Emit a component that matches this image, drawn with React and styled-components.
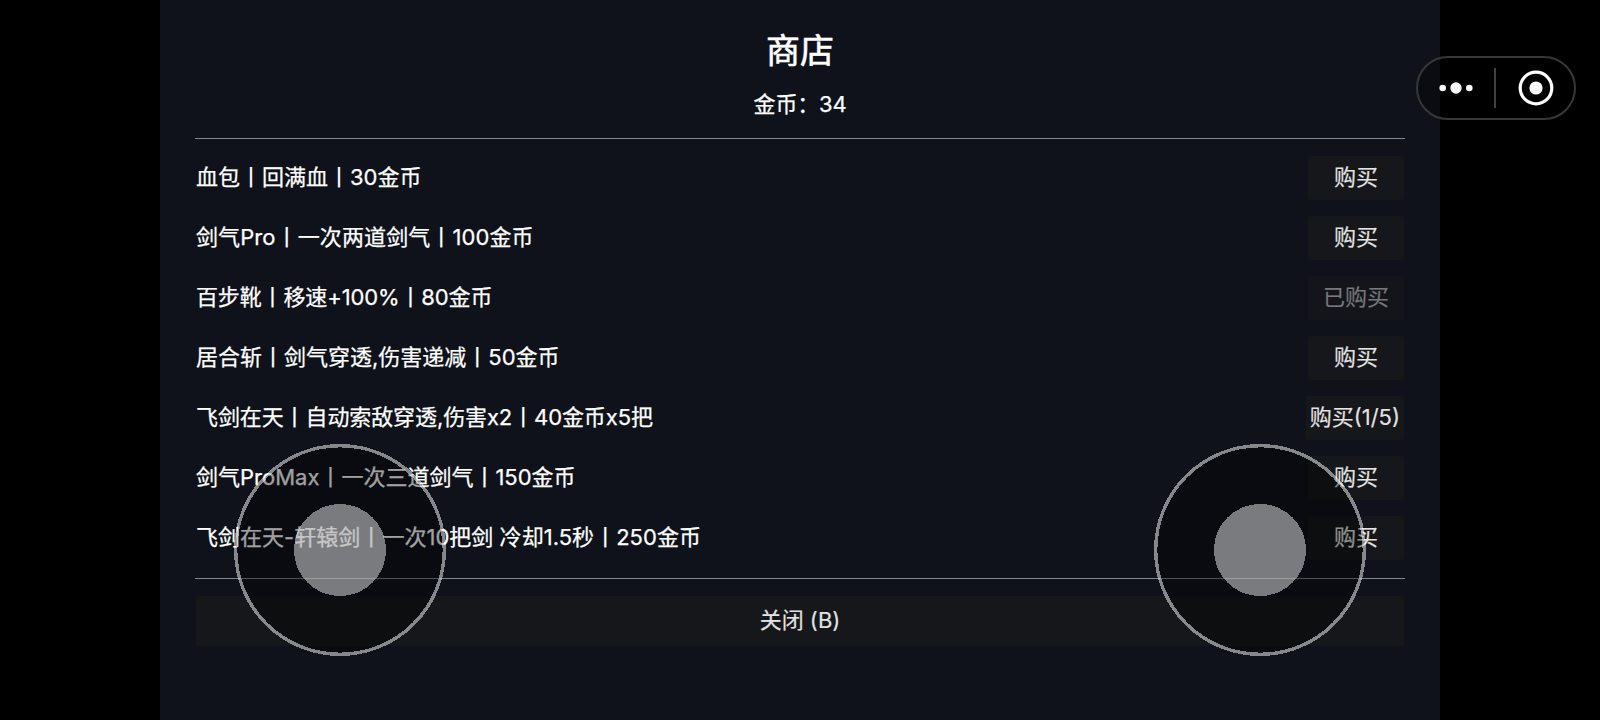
import React from "react";
import styled, { createGlobalStyle } from "styled-components";

const GlobalStyle = createGlobalStyle`
  * {
    box-sizing: border-box;
  }
  body {
    margin: 0;
    background: #000;
    overflow: hidden;
    font-family: Inter, "Noto Sans CJK SC", sans-serif;
  }
`;

const Screen = styled.div`
  position: relative;
  display: flex;
  justify-content: center;
  width: 1600px;
  height: 720px;
  background: #000;
`;

const Panel = styled.main`
  display: flex;
  flex-direction: column;
  width: 1280px;
  height: 720px;
  padding: 28px 35px 0;
  background: #0f121a;
  color: #fff;
  font-size: 22px;
  font-weight: 400;
  -webkit-text-stroke: 0.25px currentColor;
`;

const Title = styled.h1`
  margin: 0;
  font-size: 34px;
  font-weight: 400;
  line-height: 46px;
  text-align: center;
  -webkit-text-stroke-width: 0.6px;
`;

const Coins = styled.div`
  height: 30px;
  margin: 15px 0 19px;
  line-height: 30px;
  text-align: center;
  letter-spacing: -0.2px;
`;

const Line = styled.hr`
  width: 100%;
  height: 1px;
  margin: 0;
  border: 0;
  background: #85868a;
`;

const List = styled.ul`
  display: flex;
  flex-direction: column;
  gap: 16px;
  margin: 0;
  padding: 17px 1px 18px;
  list-style: none;
`;

const Row = styled.li`
  display: flex;
  align-items: center;
  justify-content: space-between;
  height: 44px;
  line-height: 43px;
  white-space: pre;
`;

const Name = styled.span`
  height: 44px;
  letter-spacing: ${({ $spacing }) => $spacing || 0}px;
`;

const Button = styled.button`
  min-width: 96px;
  height: 44px;
  padding: 0 4px 2px;
  border: 0;
  border-radius: 3px;
  background: #16171a;
  color: #e3e3e3;
  font: inherit;
  line-height: 42px;
  white-space: nowrap;
  -webkit-text-stroke: 0.15px currentColor;

  &:disabled {
    background: #13151a;
    color: #77787b;
  }
`;

const CloseButton = styled(Button)`
  height: 50px;
  margin: 17px 1px 0;
  line-height: 48px;
`;

const Stick = styled.svg`
  position: absolute;
  top: 444px;
  left: ${({ $center }) => $center - 106}px;
  width: 212px;
  height: 212px;
`;

const Capsule = styled.div`
  position: absolute;
  top: 56px;
  left: 1416px;
  width: 160px;
  height: 64px;
  border: 2px solid #38383a;
  border-radius: 32px;
  background: rgba(0, 0, 0, 0.3);

  svg {
    display: block;
  }
`;

const items = [
  { text: "血包丨回满血丨30金币", action: "购买" },
  { text: "剑气Pro丨一次两道剑气丨100金币", action: "购买", spacing: 0.1 },
  { text: "百步靴丨移速+100%丨80金币", action: "已购买", spacing: -0.13, bought: true },
  { text: "居合斩丨剑气穿透,伤害递减丨50金币", action: "购买" },
  { text: "飞剑在天丨自动索敌穿透,伤害x2丨40金币x5把", action: "购买(1/5)", spacing: -0.1 },
  { text: "剑气ProMax丨一次三道剑气丨150金币", action: "购买" },
  { text: "飞剑在天-轩辕剑丨一次10把剑 冷却1.5秒丨250金币", action: "购买", spacing: 0.03 },
];

const Joystick = ({ center }) => (
  <Stick $center={center} viewBox="0 0 212 212" shapeRendering="crispEdges">
    <circle cx="106" cy="106" r="104.3" fill="#000" fillOpacity="0.37" />
    <circle cx="106" cy="106" r="104.3" fill="none" stroke="#fff" strokeOpacity="0.5" strokeWidth="3.4" />
    <circle cx="106" cy="106" r="46" fill="#ebebec" fillOpacity="0.5" />
  </Stick>
);

const App = () => {
  return (
    <>
      <GlobalStyle />
      <Screen>
        <Panel>
          <Title>商店</Title>
          <Coins>金币：34</Coins>
          <Line />
          <List>
            {items.map((item) => (
              <Row key={item.text}>
                <Name $spacing={item.spacing}>{item.text}</Name>
                <Button disabled={item.bought}>{item.action}</Button>
              </Row>
            ))}
          </List>
          <Line />
          <CloseButton>关闭 (B)</CloseButton>
        </Panel>
        <Joystick center={340} />
        <Joystick center={1260} />
        <Capsule>
          <svg width="156" height="60" viewBox="0 0 156 60" fill="#fff">
            <circle cx="24.7" cy="30" r="3.3" />
            <circle cx="38" cy="30" r="5.7" />
            <circle cx="51.3" cy="30" r="3.3" />
            <rect x="76" y="10" width="2" height="40" fill="#404042" />
            <circle cx="118" cy="30" r="15.8" fill="none" stroke="#fff" strokeWidth="3.2" />
            <circle cx="118" cy="30" r="6.6" />
          </svg>
        </Capsule>
      </Screen>
    </>
  );
};

export default App;
